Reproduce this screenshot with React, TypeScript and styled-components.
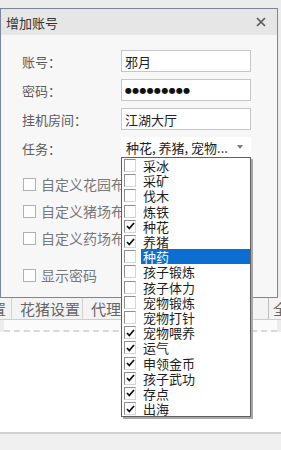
import styled, { createGlobalStyle } from "styled-components";

const GlobalStyle = createGlobalStyle`
  html, body {
    margin: 0;
    padding: 0;
  }
  body {
    background: #ececec;
    font-family: "Noto Sans CJK SC", "Noto Sans", sans-serif;
  }
`;

const tasks = [
  { name: "采冰", on: false },
  { name: "采矿", on: false },
  { name: "伐木", on: false },
  { name: "炼铁", on: false },
  { name: "种花", on: true },
  { name: "养猪", on: true },
  { name: "种药", on: false, active: true },
  { name: "孩子锻炼", on: false },
  { name: "孩子体力", on: false },
  { name: "宠物锻炼", on: false },
  { name: "宠物打针", on: false },
  { name: "宠物喂养", on: true },
  { name: "运气", on: true },
  { name: "申领金币", on: true },
  { name: "孩子武功", on: true },
  { name: "存点", on: true },
  { name: "出海", on: true },
];

const options = ["自定义花园布局", "自定义猪场布局", "自定义药场布局"];

const Tick = () => (
  <svg width="9" height="8" viewBox="0 0 9 8">
    <path d="M1 4 L3.3 6.5 L8 1" fill="none" stroke="#111" strokeWidth="1.8" />
  </svg>
);

export default function App() {
  return (
    <>
      <GlobalStyle />
      <Screen>
        <BackArea />
        <TabBar>
          <Tab $w={12} $end>设置</Tab>
          <Tab $w={71}>花猪设置</Tab>
          <Tab $w={100}>代理设置</Tab>
          <TabGap />
          <Tab $w={13} $left>全部</Tab>
        </TabBar>
        <HeadRow />
        <ListArea />
        <StatusBar />

        <Dialog>
          <TitleBar>
            <Title>增加账号</Title>
            <CloseBtn>
              <svg width="10" height="10" viewBox="0 0 10 10">
                <path d="M1 1 L9 9 M9 1 L1 9" stroke="#5a5a5a" strokeWidth="1.7" />
              </svg>
            </CloseBtn>
          </TitleBar>
          <Body>
            <Form>
              <Label>账号：</Label>
              <Field>邪月</Field>
              <Label>密码：</Label>
              <Field $dots>●●●●●●●●●</Field>
              <Label>挂机房间：</Label>
              <Field>江湖大厅</Field>
              <Label>任务：</Label>
              <ComboWrap>
                <Combo>
                  <span>种花, 养猪, 宠物...</span>
                  <Arrow />
                </Combo>
                <DropList>
                  {tasks.map((t) => (
                    <DropItem key={t.name}>
                      <ItemBox>{t.on && <Tick />}</ItemBox>
                      <ItemText $active={!!t.active}>{t.name}</ItemText>
                    </DropItem>
                  ))}
                </DropList>
              </ComboWrap>
            </Form>
            <Options>
              {options.map((o) => (
                <CheckRow key={o}>
                  <Box />
                  <CheckText>{o}</CheckText>
                </CheckRow>
              ))}
              <CheckRow $gap>
                <Box />
                <CheckText>显示密码</CheckText>
              </CheckRow>
            </Options>
          </Body>
        </Dialog>
      </Screen>
    </>
  );
}

const Screen = styled.div`
  position: relative;
  width: 281px;
  height: 450px;
  display: flex;
  flex-direction: column;
  overflow: hidden;
  background: #ececec;
`;

const BackArea = styled.div`
  height: 297px;
  flex-shrink: 0;
  background: #ececec;
`;

const TabBar = styled.div`
  height: 23px;
  flex-shrink: 0;
  display: flex;
  background: #f3f3f3;
  border-bottom: 1px solid #cdcdcd;
  box-sizing: border-box;
`;

const Tab = styled.div<{ $w: number; $end?: boolean; $left?: boolean }>`
  width: ${(p) => p.$w}px;
  flex-shrink: 0;
  display: flex;
  align-items: center;
  justify-content: ${(p) => (p.$end ? "flex-end" : "flex-start")};
  padding: ${(p) => (p.$end ? "0 5px 0 0" : "0 0 0 8px")};
  box-sizing: border-box;
  overflow: hidden;
  white-space: nowrap;
  font-size: 15px;
  color: #666;
  border-right: ${(p) => (p.$left ? "none" : "1px solid #d2d2d2")};
  border-left: ${(p) => (p.$left ? "1px solid #bdbdbd" : "none")};
  padding-left: ${(p) => (p.$left ? "4px" : undefined)};
`;

const TabGap = styled.div`
  flex: 1;
`;

const HeadRow = styled.div`
  height: 12px;
  flex-shrink: 0;
  background: #fbfbfb;
  border-bottom: 2px dashed #d8d8d8;
  box-sizing: border-box;
  margin: 0 4px;
`;

const ListArea = styled.div`
  flex: 1;
  background: #ffffff;
`;

const StatusBar = styled.div`
  height: 16px;
  flex-shrink: 0;
  background: #f0f0f0;
  border-top: 2px solid #d2d2d2;
`;

const Dialog = styled.div`
  position: absolute;
  left: 0;
  top: 8px;
  width: 278px;
  height: 290px;
  box-sizing: border-box;
  border: 1px solid #7a869c;
  background: #f7f7f7;
  display: flex;
  flex-direction: column;
`;

const TitleBar = styled.div`
  height: 26px;
  flex-shrink: 0;
  display: flex;
  align-items: center;
  justify-content: space-between;
  background: #e6e6e6;
  padding: 0 11px 0 5px;
`;

const Title = styled.div`
  font-size: 13px;
  color: #333;
`;

const CloseBtn = styled.div`
  display: flex;
  align-items: center;
`;

const Body = styled.div`
  flex: 1;
  padding: 15px 0 0 21px;
  display: flex;
  flex-direction: column;
`;

const Form = styled.div`
  display: grid;
  grid-template-columns: 99px 130px;
  grid-auto-rows: 22px;
  row-gap: 7px;
  align-items: center;
`;

const Label = styled.div`
  font-size: 13px;
  color: #5c5c5c;
`;

const Field = styled.div<{ $dots?: boolean }>`
  height: 22px;
  box-sizing: border-box;
  border: 1px solid #c6c6c6;
  background: #fff;
  padding-left: 3px;
  display: flex;
  align-items: center;
  font-size: ${(p) => (p.$dots ? "8px" : "13px")};
  letter-spacing: ${(p) => (p.$dots ? "0.3px" : "0")};
  color: ${(p) => (p.$dots ? "#111" : "#222")};
  font-family: ${(p) => (p.$dots ? '"DejaVu Sans", sans-serif' : "inherit")};
`;

const ComboWrap = styled.div`
  position: relative;
  height: 20px;
  align-self: start;
`;

const Combo = styled.div`
  height: 20px;
  display: flex;
  align-items: center;
  justify-content: space-between;
  padding: 0 8px 0 5px;
  background: #fff;
  font-size: 13px;
  color: #222;
`;

const Arrow = styled.div`
  width: 0;
  height: 0;
  border-left: 3px solid transparent;
  border-right: 3px solid transparent;
  border-top: 4px solid #7a7a7a;
`;

const DropList = styled.div`
  position: absolute;
  top: 20px;
  left: 0;
  width: 130px;
  box-sizing: border-box;
  border: 1px solid #5f5f5f;
  background: #fff;
  box-shadow: 2px 2px 0 #a8a8a8;
  z-index: 2;
`;

const DropItem = styled.div`
  height: 15.2px;
  display: flex;
  align-items: center;
  padding-left: 2px;
`;

const ItemBox = styled.div`
  width: 12px;
  height: 13px;
  flex-shrink: 0;
  box-sizing: border-box;
  border: 1px solid;
  border-color: #8e8e8e #d6d6d6 #d6d6d6 #8e8e8e;
  background: #fff;
  display: flex;
  align-items: center;
  justify-content: flex-start;
  padding-left: 1px;
`;

const ItemText = styled.div<{ $active: boolean }>`
  flex: 1;
  margin-left: 5px;
  padding-left: 2px;
  height: 15px;
  line-height: 15px;
  font-size: 13px;
  color: ${(p) => (p.$active ? "#fff" : "#1e1e1e")};
  background: ${(p) => (p.$active ? "#0a6fd0" : "transparent")};
`;

const Options = styled.div`
  display: flex;
  flex-direction: column;
  margin-top: 15px;
`;

const CheckRow = styled.div<{ $gap?: boolean }>`
  height: 20px;
  display: flex;
  align-items: center;
  margin-top: ${(p) => (p.$gap ? "17px" : "7px")};
  &:first-child {
    margin-top: 0;
  }
`;

const Box = styled.div`
  width: 13px;
  height: 13px;
  margin-left: 1px;
  box-sizing: border-box;
  border: 1px solid #b0b0b0;
  background: #fdfdfd;
`;

const CheckText = styled.div`
  margin-left: 5px;
  font-size: 14px;
  color: #777;
  white-space: nowrap;
`;
